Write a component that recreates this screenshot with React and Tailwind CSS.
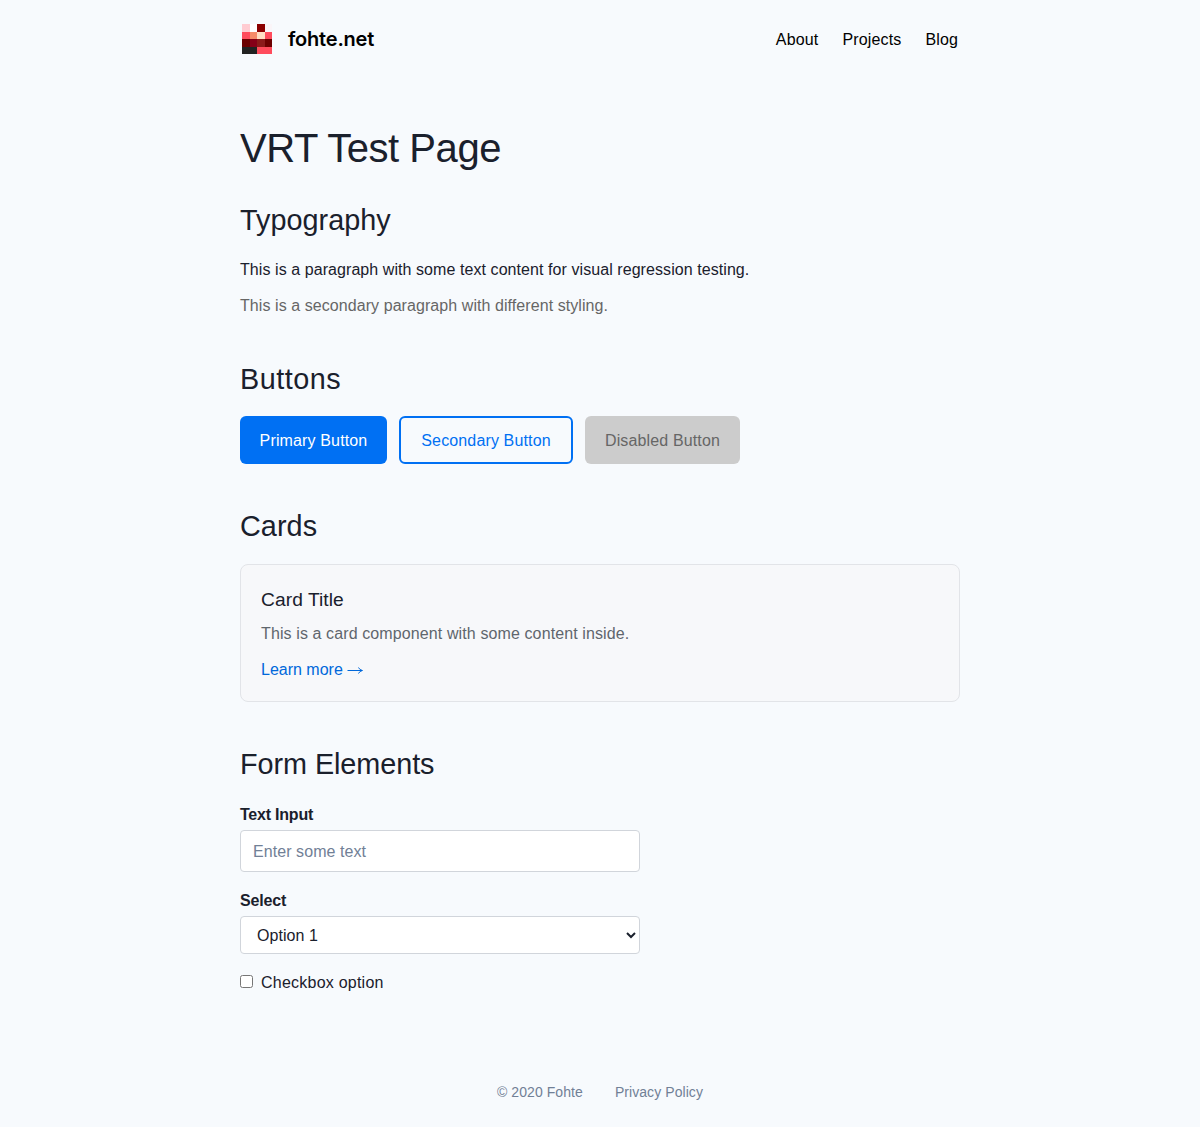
const pixels = [
  ["#ffccd2", "#ffffff", "#8b0000", "#faf5f8"],
  ["#ff4b5c", "#f68c69", "#ffdfc4", "#ff4b5c"],
  ["#6b0000", "#850018", "#8b1a1a", "#6b0000"],
  ["#222222", "#222222", "#ff4b5c", "#ff4b5c"],
];

function Logo() {
  return (
    <svg width="30" height="30" viewBox="0 0 4 4" shapeRendering="crispEdges">
      {pixels.map((row, y) =>
        row.map((c, x) => <rect key={`${x}-${y}`} x={x} y={y} width="1" height="1" fill={c} />)
      )}
    </svg>
  );
}

export default function App() {
  return (
    <div className="min-h-[1127px] bg-[#f7fafd] font-['Liberation_Sans',Arial,sans-serif] tracking-[0.07px] text-[#1a202c]">
      <div className="mx-auto w-[720px]">
        <header className="flex h-[78px] items-center justify-between px-[2px] text-black">
          <div className="flex items-center gap-4">
            <Logo />
            <span className="font-['Inter',sans-serif] text-xl font-semibold tracking-[-0.2px]">fohte.net</span>
          </div>
          <nav className="flex gap-6 pt-[2px] tracking-[0.15px]">
            <a>About</a>
            <a>Projects</a>
            <a>Blog</a>
          </nav>
        </header>
        <main>
          <h1 className="mt-[46px] text-[40px] leading-[48px] tracking-[-0.45px]">VRT Test Page</h1>
          <section>
            <h2 className="mt-[30px] text-[28.8px] leading-[36px] tracking-[0.02px]">Typography</h2>
            <p className="mt-5">This is a paragraph with some text content for visual regression testing.</p>
            <p className="mt-3 text-[#666]">This is a secondary paragraph with different styling.</p>
          </section>
          <section>
            <h2 className="mt-[43px] text-[28.8px] leading-[36px] tracking-[0.5px]">Buttons</h2>
            <div className="mt-[19px] flex gap-3 tracking-[0.14px]">
              <button className="h-12 w-[147px] rounded-md bg-[#0070f3] pt-[2px] text-white">Primary Button</button>
              <button className="h-12 w-[174px] rounded-md border-2 border-[#0070f3] pt-[2px] text-[#0070f3]">Secondary Button</button>
              <button className="h-12 w-[155px] rounded-md bg-[#ccc] pt-[2px] text-[#666]">Disabled Button</button>
            </div>
          </section>
          <section>
            <h2 className="mt-11 text-[28.8px] leading-[36px]">Cards</h2>
            <div className="mt-5 h-[138px] rounded-lg border border-[#e2e4e8] bg-[#f7f8fa] px-5 pt-[21px]">
              <h3 className="text-[19.2px] leading-7">Card Title</h3>
              <p className="mt-2 tracking-[0.11px] text-[#5f666d]">This is a card component with some content inside.</p>
              <a className="mt-3 flex items-center gap-1 tracking-[0px] text-[#0068da]">
                Learn more
                <svg width="17" height="10" viewBox="0 0 17 10" fill="none" stroke="currentColor" strokeWidth="1" className="mt-[2px]">
                  <path d="M0.5 4.500H15M11.500 1.500Q12.500 4 15.500 4.500Q12.500 5 11.500 7.500" />
                </svg>
              </a>
            </div>
          </section>
          <section>
            <h2 className="mt-11 text-[28.8px] leading-[36px] tracking-[-0.06px]">Form Elements</h2>
            <form className="flex w-[400px] flex-col">
              <label htmlFor="text" className="mt-[21px] leading-6 font-bold tracking-[-0.22px]">Text Input</label>
              <input
                id="text"
                placeholder="Enter some text"
                className="mt-[3px] h-[42px] rounded border border-[#d1d5db] bg-white px-3 pt-[2px] placeholder:text-[#718096]"
              />
              <label htmlFor="select" className="mt-[17px] leading-6 font-bold tracking-[-0.15px]">Select</label>
              <select id="select" className="mt-[3px] h-[38px] rounded border border-[#d1d5db] bg-white px-3 pr-0">
                <option>Option 1</option>
              </select>
              <label className="mt-[15px] flex items-center gap-2 tracking-[0.23px]">
                <input type="checkbox" className="mb-[2px] h-[13px] w-[13px]" />
                <span className="pt-[2px]">Checkbox option</span>
              </label>
            </form>
          </section>
        </main>
        <footer className="mt-[87px] flex justify-center gap-8 text-sm text-[#718096]">
          <span>© 2020 Fohte</span>
          <a>Privacy Policy</a>
        </footer>
      </div>
    </div>
  );
}
